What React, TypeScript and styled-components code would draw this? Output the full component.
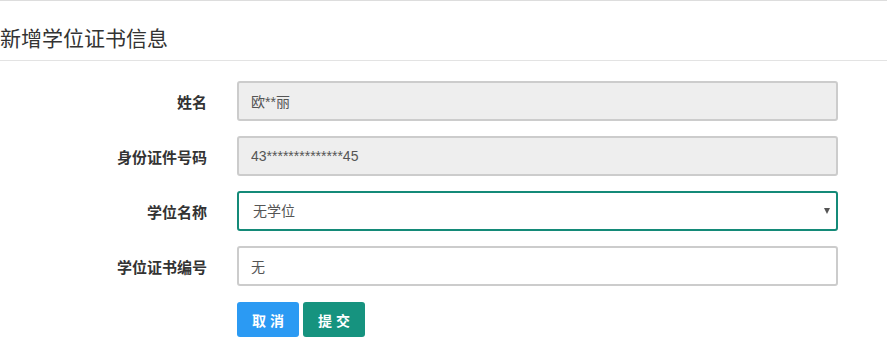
import React from 'react';
import styled, { createGlobalStyle } from 'styled-components';

const GlobalStyle = createGlobalStyle`
  body {
    margin: 0;
    background: #fff;
    font-family: "Liberation Sans", "Noto Sans CJK SC", sans-serif;
  }
`;

const Page = styled.div`
  width: 887px;
  height: 355px;
  overflow: hidden;
  border-top: 1px solid #ddd;
  box-sizing: border-box;
`;

const Header = styled.div`
  height: 60px;
  border-bottom: 1px solid #e3e3e3;
  display: flex;
  align-items: flex-end;
  padding-bottom: 9px;
  box-sizing: border-box;
`;

const Title = styled.h3`
  margin: 0;
  font-size: 21px;
  line-height: 24px;
  font-weight: normal;
  color: #333;
`;

const Form = styled.form`
  display: flex;
  flex-direction: column;
  gap: 15px;
  padding-top: 20px;
`;

const Row = styled.div`
  display: flex;
  align-items: center;
  height: 40px;
`;

const Label = styled.label`
  width: 207px;
  padding-right: 30px;
  box-sizing: content-box;
  text-align: right;
  font-size: 15px;
  font-weight: bold;
  color: #333;
`;

const Input = styled.input<{ $disabled?: boolean }>`
  width: 601px;
  height: 40px;
  box-sizing: border-box;
  padding: 0 12px;
  border: 2px solid #ccc;
  border-radius: 3px;
  background: ${({ $disabled }) => ($disabled ? '#eee' : '#fff')};
  color: #555;
  font-size: 14px;
  font-family: "Liberation Sans", "Noto Sans CJK SC", sans-serif;
  outline: none;
`;

const SelectWrap = styled.div`
  position: relative;
  width: 601px;
`;

const Select = styled.select`
  width: 100%;
  height: 40px;
  box-sizing: border-box;
  padding: 0 14px;
  border: 2px solid #148a78;
  border-radius: 3px;
  background: #fff;
  color: #555;
  font-size: 14px;
  font-family: "Liberation Sans", "Noto Sans CJK SC", sans-serif;
  appearance: none;
  outline: none;
`;

const Caret = styled.span`
  position: absolute;
  right: 8px;
  top: 17px;
  width: 0;
  height: 0;
  border-left: 3px solid transparent;
  border-right: 3px solid transparent;
  border-top: 6px solid #555;
  pointer-events: none;
`;

const Actions = styled.div`
  display: flex;
  gap: 4px;
  padding-left: 237px;
  margin-top: 1px;
`;

const Button = styled.button<{ $tone: 'cancel' | 'submit' }>`
  height: 35px;
  padding: 0 11px 0 15px;
  border: none;
  border-radius: 3px;
  color: #fff;
  font-size: 14px;
  font-weight: bold;
  letter-spacing: 4px;
  font-family: "Liberation Sans", "Noto Sans CJK SC", sans-serif;
  background: ${({ $tone }) => ($tone === 'cancel' ? '#2b9af3' : '#16937f')};
  cursor: pointer;
`;

export default function App() {
  return (
    <Page>
      <GlobalStyle />
      <Header>
        <Title>新增学位证书信息</Title>
      </Header>
      <Form onSubmit={(e) => e.preventDefault()}>
        <Row>
          <Label>姓名</Label>
          <Input $disabled disabled value="欧**丽" readOnly />
        </Row>
        <Row>
          <Label>身份证件号码</Label>
          <Input $disabled disabled value="43**************45" readOnly />
        </Row>
        <Row>
          <Label>学位名称</Label>
          <SelectWrap>
            <Select defaultValue="none">
              <option value="none">无学位</option>
            </Select>
            <Caret />
          </SelectWrap>
        </Row>
        <Row>
          <Label>学位证书编号</Label>
          <Input defaultValue="无" />
        </Row>
        <Actions>
          <Button type="button" $tone="cancel">取消</Button>
          <Button type="submit" $tone="submit">提交</Button>
        </Actions>
      </Form>
    </Page>
  );
}
